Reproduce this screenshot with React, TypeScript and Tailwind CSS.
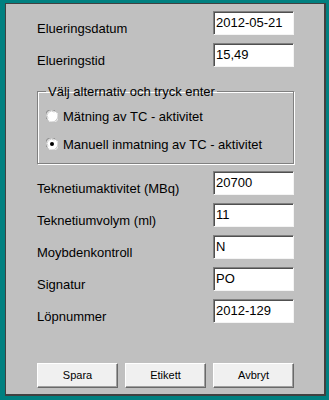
const labelFont = "font-['Liberation_Sans',Arial,sans-serif]";

function Field({ value }: { value: string }) {
  return (
    <div className="w-[81px] h-[24px] bg-white border border-t-[#808080] border-l-[#808080] border-b-[#f4f4f4] border-r-[#f4f4f4] shadow-[inset_1px_1px_0_#505050] pl-[2px] pt-[3px] text-[13px] leading-[15px] text-black">
      {value}
    </div>
  );
}

function Row({ label, value }: { label: string; value: string }) {
  return (
    <div className="flex justify-between items-start h-[24px]">
      <span className="mt-[10px] text-[13px] leading-[15px] text-black">{label}</span>
      <Field value={value} />
    </div>
  );
}

function Radio({ checked, label }: { checked?: boolean; label: string }) {
  return (
    <div className="flex items-center h-[16px] gap-[5px]">
      <svg width="12" height="12" viewBox="0 0 12 12">
        <circle cx="6" cy="6" r="5.5" fill="#ffffff" />
        <path d="M1.2 9.2 A5.5 5.5 0 0 1 9.2 1.2" fill="none" stroke="#8a8a8a" strokeWidth="1" />
        <path d="M2.2 8.4 A4.4 4.4 0 0 1 8.4 2.2" fill="none" stroke="#d0d0d0" strokeWidth="1" />
        <path d="M10.8 2.8 A5.5 5.5 0 0 1 2.8 10.8" fill="none" stroke="#f0f0f0" strokeWidth="1" />
        {checked && <circle cx="6" cy="6" r="2" fill="#000000" />}
      </svg>
      <span className="text-[13px] leading-[15px] text-black">{label}</span>
    </div>
  );
}

function Button({ children }: { children: string }) {
  return (
    <button className="w-[81px] h-[25px] bg-[#f0f0f0] border border-t-white border-l-white border-b-[#696969] border-r-[#696969] shadow-[inset_-1px_-1px_0_#a0a0a0] text-[11px] leading-[13px] text-black">
      {children}
    </button>
  );
}

export default function App() {
  return (
    <div className={`w-[329px] h-[400px] bg-[#008080] pl-[5px] pt-[3px] ${labelFont}`}>
      <div className="w-[321px] h-[393px] bg-[#c0c0c0] border-l border-t border-r-2 border-b-2 border-[#404040] pl-[31px] pr-[30px] pt-[7px] flex flex-col">
        <div className="flex flex-col gap-[8px]">
          <Row label="Elueringsdatum" value="2012-05-21" />
          <Row label="Elueringstid" value="15,49" />
        </div>

        <fieldset className="mt-[17px] border border-[#808080] shadow-[inset_1px_1px_0_#ffffff,1px_1px_0_#ffffff] pl-[8px] pb-[11px]">
          <legend className="px-[2px] text-[13px] leading-[15px] text-black">Välj alternativ och tryck enter</legend>
          <div className="mt-[9px] flex flex-col gap-[12px]">
            <Radio label="Mätning av TC - aktivitet" />
            <Radio checked label="Manuell inmatning av TC - aktivitet" />
          </div>
        </fieldset>

        <div className="mt-[7px] flex flex-col gap-[8px]">
          <Row label="Teknetiumaktivitet (MBq)" value="20700" />
          <Row label="Teknetiumvolym (ml)" value="11" />
          <Row label="Moybdenkontroll" value="N" />
          <Row label="Signatur" value="PO" />
          <Row label="Löpnummer" value="2012-129" />
        </div>

        <div className="mt-[40px] flex justify-between">
          <Button>Spara</Button>
          <Button>Etikett</Button>
          <Button>Avbryt</Button>
        </div>
      </div>
    </div>
  );
}
